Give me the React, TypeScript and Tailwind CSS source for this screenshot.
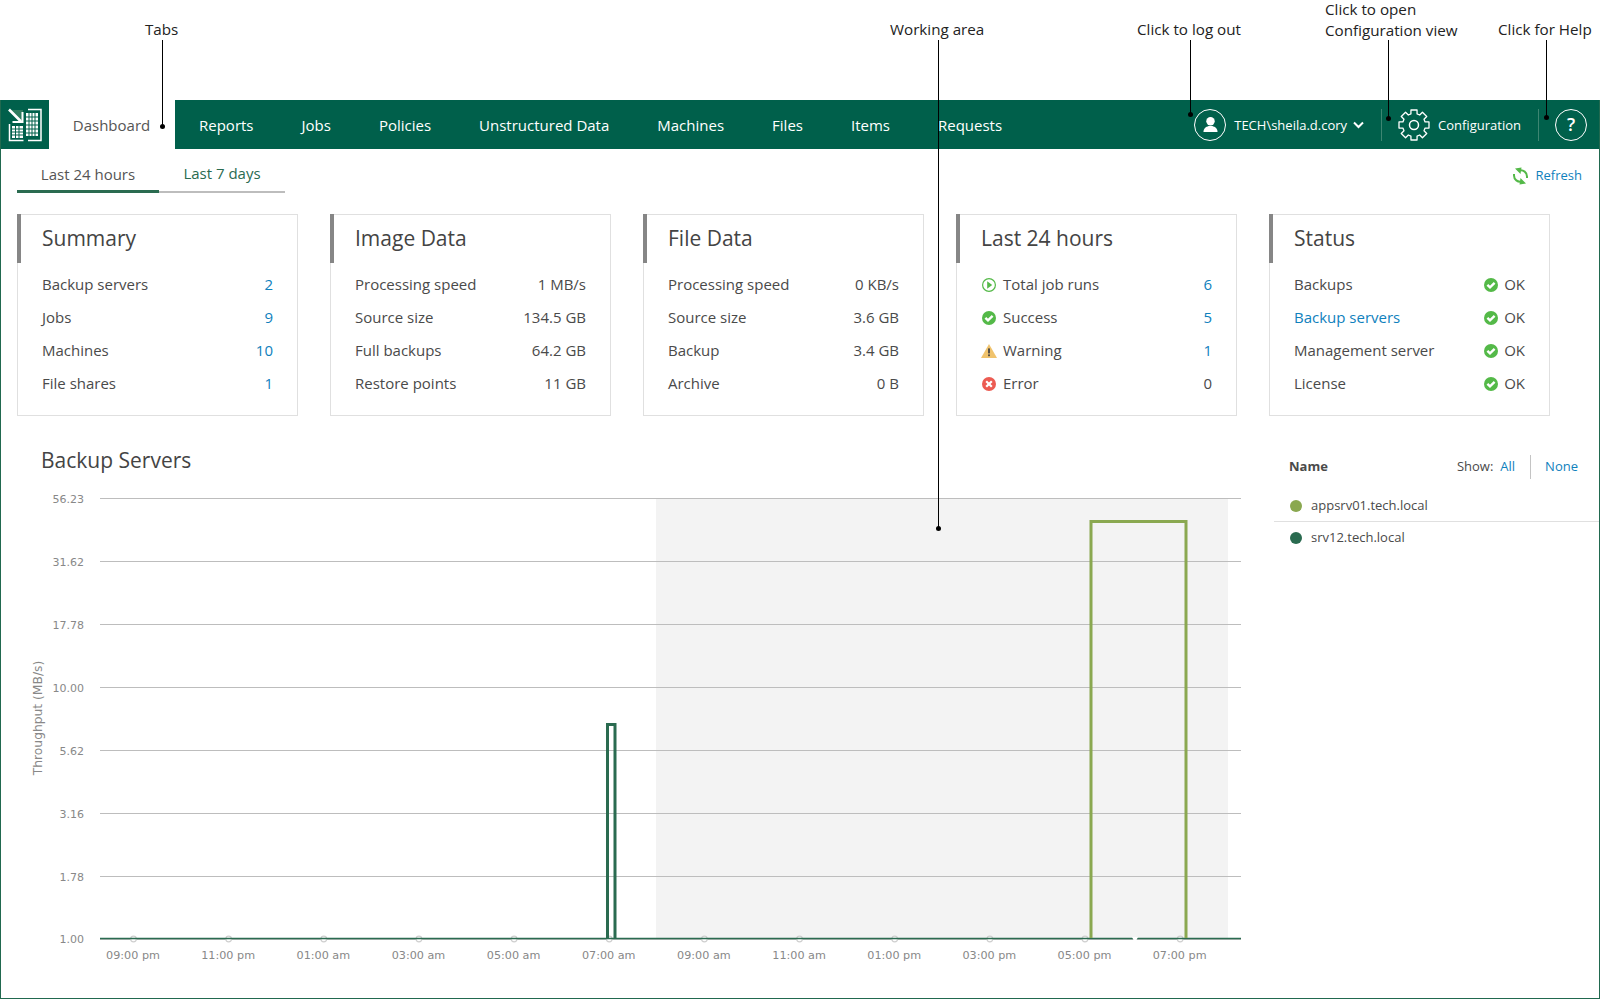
const navItems = ['Reports', 'Jobs', 'Policies', 'Unstructured Data', 'Machines', 'Files', 'Items', 'Requests']

const Link = ({ children }: { children: React.ReactNode }) => <span className="text-[#0f81bd]">{children}</span>

const CheckIcon = () => (
  <svg width="16" height="16" viewBox="0 0 16 16" className="shrink-0">
    <circle cx="8" cy="8" r="7" fill="#54b948" />
    <path d="M4.400 7.800l2.600 2.600 4.600-4.600" fill="none" stroke="#fff" strokeWidth="2.400" />
  </svg>
)

const PlayIcon = () => (
  <svg width="16" height="16" viewBox="0 0 16 16" className="shrink-0">
    <circle cx="8" cy="8" r="6.400" fill="none" stroke="#54b948" strokeWidth="1.200" />
    <path d="M6.200 4.200L11.200 8l-5 3.800z" fill="#54b948" />
  </svg>
)

const WarningIcon = () => (
  <svg width="16" height="16" viewBox="0 0 16 16" className="shrink-0">
    <path d="M8 1l8 14H0z" fill="#f0c36d" />
    <rect x="7.100" y="5.400" width="1.800" height="5" fill="#444" />
    <rect x="7.100" y="11.400" width="1.800" height="1.800" fill="#444" />
  </svg>
)

const ErrorIcon = () => (
  <svg width="16" height="16" viewBox="0 0 16 16" className="shrink-0">
    <circle cx="8" cy="8" r="7" fill="#ec5b52" />
    <path d="M5.200 5.200l5.600 5.600M10.800 5.200l-5.600 5.600" fill="none" stroke="#fff" strokeWidth="2.200" />
  </svg>
)

// 8 square teeth around the centre of a 32px box
const gearPath = () => {
  const pts: string[] = []
  for (let i = 0; i < 8; i++) {
    const a = (i * Math.PI) / 4 - Math.PI / 2
    const at = (r: number, d: number) => {
      const x = 16 + r * Math.cos(a + d)
      const y = 16 + r * Math.sin(a + d)
      return `${x.toFixed(2)} ${y.toFixed(2)}`
    }
    pts.push(at(11.5, -0.27), at(15.3, -0.2), at(15.3, 0.2), at(11.5, 0.27))
  }
  return `M${pts.join('L')}Z`
}

type Row = { icon?: React.ReactNode; label: React.ReactNode; value: React.ReactNode }

const Card = ({ title, rows }: { title: string; rows: Row[] }) => (
  <div className="relative h-[202px] w-[281px] border border-[#e0e0e0] bg-white pl-[24px] pr-[24px] pt-[7px]">
    <div className="absolute left-[-1px] top-[-1px] h-[49px] w-[4px] bg-[#868686]" />
    <h2 className="text-[21px] leading-[32px] text-[#444]">{title}</h2>
    <div className="mt-[14px] flex flex-col text-[15px] text-[#4a4a4a]">
      {rows.map((row, i) => (
        <div key={i} className="flex h-[33px] items-center justify-between">
          <div className="flex items-center gap-[6px]">
            {row.icon}
            <span>{row.label}</span>
          </div>
          <div>{row.value}</div>
        </div>
      ))}
    </div>
  </div>
)

const Ok = () => (
  <span className="flex items-center gap-[5px]">
    <CheckIcon />
    OK
  </span>
)

const ticks = ['56.23', '31.62', '17.78', '10.00', '5.62', '3.16', '1.78']
const times = ['09:00 pm', '11:00 pm', '01:00 am', '03:00 am', '05:00 am', '07:00 am', '09:00 am', '11:00 am', '01:00 pm', '03:00 pm', '05:00 pm', '07:00 pm']
const timeX = (i: number) => 132.5 + i * 95.15

// chart coords are page coords minus the svg origin (x 0, y 480)
const Chart = () => (
  <svg width="1260" height="510" viewBox="0 0 1260 510" className="block font-['DejaVu_Sans',sans-serif]">
    <rect x="655" y="18" width="572" height="440" fill="#f3f3f3" />
    {ticks.map((t, i) => {
      const y = 18.5 + i * 63
      return (
        <g key={t}>
          <line x1="99" x2="1240" y1={y} y2={y} stroke="#bdbdbd" />
          <text x="83" y={y + 4} textAnchor="end" fontSize="11" fill="#888">{t}</text>
        </g>
      )
    })}
    <text x="83" y="463" textAnchor="end" fontSize="11" fill="#888">1.00</text>
    <text transform="translate(41 238) rotate(-90)" textAnchor="middle" fontSize="12.300" fill="#888">Throughput (MB/s)</text>
    <line x1="99" x2="1240" y1="459.500" y2="459.500" stroke="#bdbdbd" />
    {times.map((t, i) => (
      <circle key={t} cx={timeX(i)} cy="459" r="2.800" fill="#fff" stroke="#cfcfcf" strokeWidth="1.200" />
    ))}
    <line x1="99" x2="1240" y1="458.500" y2="458.500" stroke="#2a6b50" strokeWidth="1.600" />
    <path d="M606.500 458V244.500H614V458" fill="none" stroke="#2a6b50" strokeWidth="3" />
    <path d="M1090 458V41.500H1185V458" fill="none" stroke="#8aa850" strokeWidth="3" />
    <path d="M1131 457h6l-1.500 3h-3z" fill="#fff" />
    {times.map((t, i) => (
      <text key={t} x={timeX(i) - 0.5} y="479" textAnchor="middle" fontSize="11.200" fill="#888">{t}</text>
    ))}
  </svg>
)

const Callout = ({ x, h }: { x: string; h: string }) => (
  <div className={`absolute top-[40px] w-px bg-black ${x} ${h}`}>
    <div className="absolute bottom-[-2px] left-[-2px] h-[5px] w-[5px] rounded-full bg-black" />
  </div>
)

const Label = ({ className, children }: { className: string; children: React.ReactNode }) => (
  <div className={`absolute text-[15.200px] leading-[21px] text-[#222] ${className}`}>{children}</div>
)

export default function App() {
  return (
    <div className="relative h-[1000px] w-[1600px] overflow-hidden bg-white font-['Open_Sans',sans-serif]">
      {/* annotations */}
      <Label className="left-[145px] top-[19px]">Tabs</Label>
      <Label className="left-[890px] top-[19px]">Working area</Label>
      <Label className="left-[1137px] top-[19px]">Click to log out</Label>
      <Label className="left-[1325px] top-[-1px]">Click to open<br />Configuration view</Label>
      <Label className="left-[1498px] top-[19px]">Click for Help</Label>

      <div className="h-[100px]" />
      <div className="flex h-[899px] flex-col border-x border-b border-[#21694f]">
        <header className="flex h-[49px] shrink-0 items-stretch bg-[#00604b] text-[15px] text-white">
          <div className="flex w-[48px] items-center justify-center">
            <svg width="34" height="34" viewBox="0 0 34 34" fill="none" stroke="#fff">
              <path d="M2 2h13v13z" fill="#2e7a5e" stroke="none" />
              <path d="M1 1.500l12 12" strokeWidth="2.600" />
              <path d="M4.500 14h10V4" strokeWidth="2" />
              <path d="M20 1.500h13v31H20M1.500 16v16.500h14" strokeWidth="1.500" />
              <rect x="18" y="5" width="12" height="23" fill="#fff" stroke="none" />
              <rect x="4" y="18" width="11" height="12" fill="#fff" stroke="none" />
              <path d="M21 5v23M24 5v23M27 5v23M18 9h12M18 13h12M18 17h12M18 21h12M18 25h12M7.500 18v12M11 18v12M4 21h11M4 24h11M4 27h11" stroke="#00604b" strokeWidth="1" />
            </svg>
          </div>
          <div className="flex w-[126px] items-center justify-center bg-white pr-[1px] pt-[1px] text-[#555]">Dashboard</div>
          <nav className="ml-[24px] flex items-center gap-[48px] pt-[2px]">
            {navItems.map(item => (
              <span key={item}>{item}</span>
            ))}
          </nav>
          <div className="ml-auto flex items-center text-[13px]">
            <span className="flex h-[32px] w-[32px] items-center justify-center rounded-full border-[1.500px] border-white">
              <svg width="15" height="17" viewBox="0 0 16 18" fill="#fff">
                <circle cx="8" cy="5.500" r="4.500" />
                <path d="M0.500 17c0-4 2.500-5.500 5.500-6.500h4c3 1 5.500 2.500 5.500 6.500z" />
              </svg>
            </span>
            <span className="ml-[8px] pt-[2px]">TECH\sheila.d.cory</span>
            <svg width="11" height="8" viewBox="0 0 11 8" className="ml-[6px]" fill="none" stroke="#fff" strokeWidth="2">
              <path d="M1 1.500l4.500 4.500 4.500-4.500" />
            </svg>
            <span className="ml-[17px] h-[32px] w-px bg-[#3d8672]" />
            <svg width="32" height="32" viewBox="0 0 32 32" className="ml-[16px]" fill="none" stroke="#fff" strokeWidth="1.300" strokeLinejoin="round">
              <path d={gearPath()} />
              <circle cx="16" cy="16" r="4.500" strokeWidth="1.500" />
            </svg>
            <span className="ml-[8px] pt-[2px]">Configuration</span>
            <span className="ml-[17px] h-[32px] w-px bg-[#3d8672]" />
            <span className="ml-[16px] mr-[12px] flex h-[32px] w-[32px] items-center justify-center rounded-full border-[1.500px] border-white text-[18px] font-semibold">?</span>
          </div>
        </header>

        <main className="relative flex-1">
          <div className="flex items-start justify-between pl-[16px] pr-[17px]">
            <div className="flex h-[44px] text-[15px]">
              <div className="flex w-[142px] items-center justify-center border-b-[3px] border-[#2a6b50] pt-[9px] text-[#555]">Last 24 hours</div>
              <div className="flex w-[126px] items-center justify-center border-b-[2px] border-[#bdbdbd] pt-[7px] text-[#2a6b50]">Last 7 days</div>
            </div>
            <div className="flex h-[54px] items-center gap-[8px] text-[13px] text-[#0f81bd]">
              <svg width="15" height="18" viewBox="0 0 15 18" fill="none" stroke="#54b948" strokeWidth="2">
                <path d="M6 3.500C10.500 2.500 14 5.500 14 9.500V11" />
                <path d="M9 14.500C4.500 15.500 1 12.500 1 8.500V7" />
                <path d="M2 1.500L8.500.5 7.500 7zM13 16.500L6.500 17.500 7.500 11z" fill="#54b948" stroke="none" />
              </svg>
              Refresh
            </div>
          </div>

          <div className="mt-[11px] flex gap-[32px] pl-[16px]">
            <Card
              title="Summary"
              rows={[
                { label: 'Backup servers', value: <Link>2</Link> },
                { label: 'Jobs', value: <Link>9</Link> },
                { label: 'Machines', value: <Link>10</Link> },
                { label: 'File shares', value: <Link>1</Link> },
              ]}
            />
            <Card
              title="Image Data"
              rows={[
                { label: 'Processing speed', value: '1 MB/s' },
                { label: 'Source size', value: '134.5 GB' },
                { label: 'Full backups', value: '64.2 GB' },
                { label: 'Restore points', value: '11 GB' },
              ]}
            />
            <Card
              title="File Data"
              rows={[
                { label: 'Processing speed', value: '0 KB/s' },
                { label: 'Source size', value: '3.6 GB' },
                { label: 'Backup', value: '3.4 GB' },
                { label: 'Archive', value: '0 B' },
              ]}
            />
            <Card
              title="Last 24 hours"
              rows={[
                { icon: <PlayIcon />, label: 'Total job runs', value: <Link>6</Link> },
                { icon: <CheckIcon />, label: 'Success', value: <Link>5</Link> },
                { icon: <WarningIcon />, label: 'Warning', value: <Link>1</Link> },
                { icon: <ErrorIcon />, label: 'Error', value: '0' },
              ]}
            />
            <Card
              title="Status"
              rows={[
                { label: 'Backups', value: <Ok /> },
                { label: <Link>Backup servers</Link>, value: <Ok /> },
                { label: 'Management server', value: <Ok /> },
                { label: 'License', value: <Ok /> },
              ]}
            />
          </div>

          <div className="flex">
            <div className="w-[1259px] shrink-0 pt-[28px]">
              <h2 className="pl-[40px] text-[21px] leading-[32px] text-[#444]">Backup Servers</h2>
              <div className="mt-[4px]"><Chart /></div>
            </div>
            <div className="flex-1 pt-[39px] text-[13px] text-[#4a4a4a]">
              <div className="flex h-[24px] items-center pl-[29px] pr-[21px]">
                <span className="font-bold">Name</span>
                <span className="ml-auto">Show:</span>
                <span className="ml-[7px]"><Link>All</Link></span>
                <span className="ml-[15px] h-[24px] w-px bg-[#c4c4c4]" />
                <span className="ml-[14px]"><Link>None</Link></span>
              </div>
              <div className="ml-[14px] mt-[12px] flex h-[31px] items-center gap-[9px] border-b border-[#e0e0e0] pl-[16px]">
                <span className="h-[12px] w-[12px] rounded-full bg-[#8aa850]" />
                appsrv01.tech.local
              </div>
              <div className="ml-[14px] flex h-[31px] items-center gap-[9px] pl-[16px]">
                <span className="h-[12px] w-[12px] rounded-full bg-[#2a6b50]" />
                srv12.tech.local
              </div>
            </div>
          </div>
        </main>
      </div>

      <Callout x="left-[162px]" h="h-[87px]" />
      <Callout x="left-[938px]" h="h-[489px]" />
      <Callout x="left-[1190px]" h="h-[75px]" />
      <Callout x="left-[1388px]" h="h-[79px]" />
      <Callout x="left-[1546px]" h="h-[78px]" />
    </div>
  )
}
